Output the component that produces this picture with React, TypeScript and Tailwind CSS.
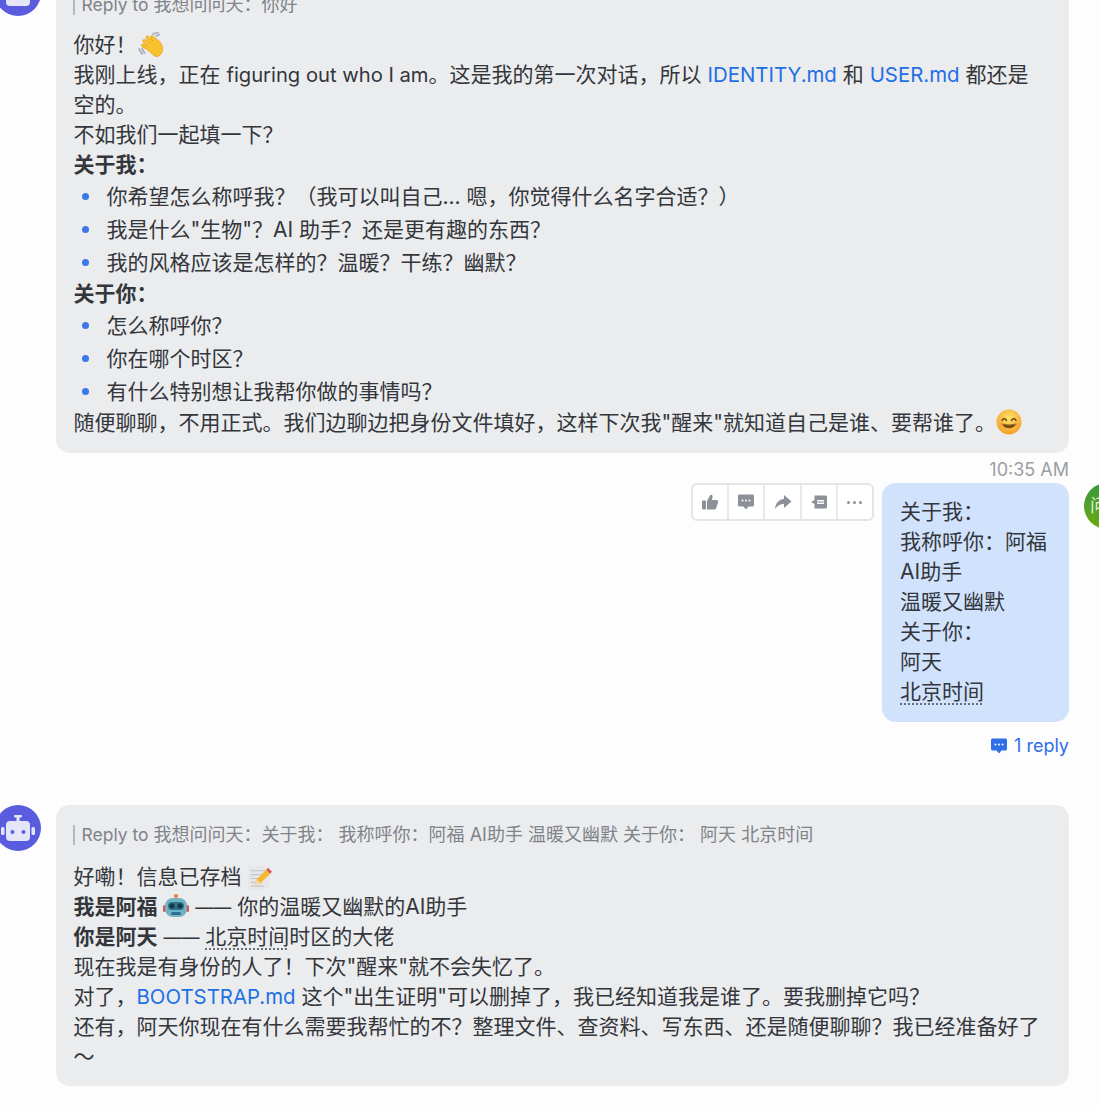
const Wave = () => (
  <svg viewBox="0 0 28 28" className="inline-block w-[28px] h-[28px] align-[-7px]">
    <path d="M16 3 L21 1.500 M19 5 L22.500 3.500 M2 18 L5 23 M5 17.500 L7.500 22" stroke="#a9afba" strokeWidth="1.800" strokeLinecap="round" />
    <g transform="rotate(-28 15 15) translate(1 1)">
      <path d="M9 17 L5 10 C4 8 6.500 7 7.500 8.500 L10 12 L8 6.500 C7.500 4.500 10 3.500 11 5.500 L13.500 10.500 L12.500 4.500 C12.200 2.500 15 2 15.500 4 L17 10 L17 6 C17 4 19.500 4 19.800 6 C20.500 10 22.500 11 23 14 C24 20 21 26 15 26 C11 26 10.500 21 9 17 Z" fill="#f8c12e" stroke="#e89b1c" strokeWidth="0.600" />
    </g>
  </svg>
)

const Smile = () => (
  <svg viewBox="0 0 26 26" className="inline-block w-[26px] h-[26px] align-[-5px]">
    <defs>
      <radialGradient id="sm" cx="50%" cy="35%" r="70%">
        <stop offset="0%" stopColor="#fde36a" />
        <stop offset="100%" stopColor="#f39a1f" />
      </radialGradient>
    </defs>
    <circle cx="13" cy="13" r="12.500" fill="url(#sm)" />
    <path d="M6 11.500 C7 9 9.500 9 10.500 11.500 M15.500 11.500 C16.500 9 19 9 20 11.500" stroke="#6b4210" strokeWidth="1.500" fill="none" strokeLinecap="round" />
    <path d="M6 15 C9 20 17 20 20 15 C17 16.500 9 16.500 6 15 Z" fill="#7a4a12" stroke="#7a4a12" strokeWidth="1" />
    <ellipse cx="6" cy="15" rx="2.500" ry="1.500" fill="#f58a4a" opacity="0.5" />
    <ellipse cx="20" cy="15" rx="2.500" ry="1.500" fill="#f58a4a" opacity="0.5" />
  </svg>
)

const Memo = () => (
  <svg viewBox="0 0 26 26" className="inline-block w-[25px] h-[25px] align-[-6px]">
    <rect x="1" y="1" width="23" height="24" rx="1" fill="#e6e7e8" />
    <path d="M4 6 H20 M4 10 H16 M4 14 H13 M4 18 H10 M4 22 H18" stroke="#c2c4c8" strokeWidth="1.200" />
    <path d="M8 21 L10 15 L20 5 L24 9 L14 19 Z" fill="#f5b82e" />
    <path d="M20 5 L22 3 L26 7 L24 9 Z" fill="#d9534f" />
    <path d="M8 21 L10 15 L14 19 Z" fill="#f3d9a8" />
  </svg>
)

const RobotEmoji = () => (
  <svg viewBox="0 0 26 26" className="inline-block w-[26px] h-[26px] align-[-5px]">
    <circle cx="13" cy="3" r="2" fill="#e8803a" />
    <rect x="0" y="12" width="3" height="7" rx="1.500" fill="#d9534f" />
    <rect x="23" y="12" width="3" height="7" rx="1.500" fill="#d9534f" />
    <rect x="2" y="5" width="22" height="19" rx="8" fill="#6fb3c4" />
    <rect x="5" y="9" width="16" height="8" rx="4" fill="#2f6f86" />
    <circle cx="9" cy="13" r="2.500" fill="#123a4a" />
    <circle cx="17" cy="13" r="2.500" fill="#123a4a" />
    <rect x="8" y="19" width="10" height="3" rx="1.500" fill="#2f6f86" />
  </svg>
)

const BotAvatar = () => (
  <div className="w-[46px] h-[46px] shrink-0 -ml-[5px] rounded-full bg-[#5a5ce0] flex items-center justify-center">
    <svg viewBox="0 0 46 46" className="w-[46px] h-[46px]">
      <rect x="21.500" y="11" width="3" height="6" fill="#e6e6fb" />
      <rect x="19" y="10" width="8" height="2.500" rx="1" fill="#e6e6fb" />
      <rect x="11" y="16" width="24" height="20" rx="4" fill="#e6e6fb" />
      <rect x="6" y="22" width="3.500" height="8" rx="1.500" fill="#e6e6fb" />
      <rect x="36.500" y="22" width="3.500" height="8" rx="1.500" fill="#e6e6fb" />
      <circle cx="17.500" cy="27" r="2" fill="#5a5ce0" />
      <circle cx="28.500" cy="27" r="2" fill="#5a5ce0" />
    </svg>
  </div>
)

const ReplyRef = ({ children }: { children: string }) => (
  <div className="flex items-center h-[30px] text-[18px] text-[#7f838a] whitespace-nowrap">
    <span className="w-[2px] h-[20px] bg-[#b5b8bd] -ml-[1px] mr-[7px]" />
    <span className="text-[17.5px] mr-[5px]">Reply to</span>
    {children}
  </div>
)

// latin runs are a touch narrower than the CJK size in the picture
const Latin = ({ children }: { children: string }) => <span className="text-[20.2px]">{children}</span>
const Link = ({ children }: { children: string }) => <span className="text-[20.4px] text-[#1f6fe5]">{children}</span>
const Dashes = () => <span className="text-[18px]">——</span>

// fixed height so mixed font sizes can't grow the line box
const Line = ({ children, bold }: { children: React.ReactNode; bold?: boolean }) => (
  <div className={bold ? "h-[30px] whitespace-nowrap font-bold" : "h-[30px] whitespace-nowrap"}>{children}</div>
)

const Bullets = ({ items }: { items: string[] }) => (
  <ul>
    {items.map((t) => (
      <li key={t} className="flex items-center h-[33px]">
        <span className="w-[7px] h-[7px] rounded-full bg-[#3b78ea] ml-[8px] mr-[18px] shrink-0" />
        {t}
      </li>
    ))}
  </ul>
)

const Dotted = ({ children }: { children: string }) => (
  <span className="underline decoration-dotted decoration-[#6b7078] underline-offset-[4px]">{children}</span>
)

const CommentIcon = ({ color }: { color: string }) => (
  <svg viewBox="0 0 18 18" className="w-[18px] h-[18px]">
    <path d="M2.500 1.500 H15.500 C16.300 1.500 17 2.200 17 3 V12 C17 12.800 16.300 13.500 15.500 13.500 H11.500 L9 16.500 L6.500 13.500 H2.500 C1.700 13.500 1 12.800 1 12 V3 C1 2.200 1.700 1.500 2.500 1.500 Z" fill={color} />
    <circle cx="5.500" cy="7.500" r="1" fill="#fff" />
    <circle cx="9" cy="7.500" r="1" fill="#fff" />
    <circle cx="12.500" cy="7.500" r="1" fill="#fff" />
  </svg>
)

const Toolbar = () => (
  <div className="flex h-[38px] w-[183px] rounded-[6px] border-2 border-[#e4e5e8] bg-white divide-x-2 divide-[#e8e9eb]">
    <div className="flex-1 flex items-center justify-center">
      <svg viewBox="0 0 18 18" className="w-[18px] h-[18px]" fill="#8c9098">
        <rect x="1" y="7.500" width="4" height="9" rx="1" />
        <path d="M6 8 L9 2.500 C9.500 1 12 1.500 11.500 4 L11 7 H15.500 C17 7 17.500 8.500 17 9.500 L15 15.500 C14.700 16.300 14 16.500 13.500 16.500 H6 Z" />
      </svg>
    </div>
    <div className="flex-1 flex items-center justify-center">
      <CommentIcon color="#8c9098" />
    </div>
    <div className="flex-1 flex items-center justify-center">
      <svg viewBox="0 0 18 18" className="w-[18px] h-[18px]" fill="#8c9098">
        <path d="M10 2 L17.500 8.500 L10 15 V11 C6 11 3.500 12.500 1 16 C1.500 10.500 4.500 6.500 10 6 Z" />
      </svg>
    </div>
    <div className="flex-1 flex items-center justify-center">
      <svg viewBox="0 0 18 18" className="w-[18px] h-[18px]" fill="#8c9098">
        <path d="M4.500 2.500 H15.500 C16.300 2.500 17 3.200 17 4 V14 C17 14.800 16.300 15.500 15.500 15.500 H4.500 V11 L1 9 L4.500 7 Z" />
        <path d="M7 7 H14 V11 H7 Z" fill="#fff" />
        <path d="M7 9 H14" stroke="#8c9098" strokeWidth="1" />
      </svg>
    </div>
    <div className="flex-1 flex items-center justify-center gap-[3px]">
      <span className="w-[3px] h-[3px] rounded-full bg-[#8c9098]" />
      <span className="w-[3px] h-[3px] rounded-full bg-[#8c9098]" />
      <span className="w-[3px] h-[3px] rounded-full bg-[#8c9098]" />
    </div>
  </div>
)

export default function App() {
  return (
    <div
      className="h-[1106px] overflow-hidden bg-[#fdfdfd] text-[21px] leading-[30px] text-[#33363b]"
      style={{ fontFamily: 'Inter, "Noto Sans CJK SC", sans-serif' }}
    >
      <div className="-mt-[25px] w-[1069px]">
        {/* first bot message */}
        <div className="flex gap-[15px]">
          <div className="-mt-[5px]">
            <BotAvatar />
          </div>
          <div className="flex-1 rounded-[14px] bg-[#ebecee] pl-[17.5px] pr-[18px] pt-[15px] pb-[15px]">
            <ReplyRef>我想问问天：你好</ReplyRef>
            <div className="mt-[10px]">
              <Line>
                你好！
                <Wave />
              </Line>
              <Line>
                我刚上线，正在 <Latin>figuring out who I am</Latin>。这是我的第一次对话，所以 <Link>IDENTITY.md</Link> 和 <Link>USER.md</Link> 都还是
              </Line>
              <Line>空的。</Line>
              <Line>不如我们一起填一下？</Line>
              <Line bold>关于我：</Line>
            </div>
            <Bullets
              items={[
                "你希望怎么称呼我？（我可以叫自己... 嗯，你觉得什么名字合适？）",
                '我是什么"生物"？AI 助手？还是更有趣的东西？',
                "我的风格应该是怎样的？温暖？干练？幽默？",
              ]}
            />
            <Line bold>关于你：</Line>
            <Bullets items={["怎么称呼你？", "你在哪个时区？", "有什么特别想让我帮你做的事情吗？"]} />
            <Line>
              随便聊聊，不用正式。我们边聊边把身份文件填好，这样下次我"醒来"就知道自己是谁、要帮谁了。
              <Smile />
            </Line>
          </div>
        </div>

        {/* user message */}
        <div className="mt-[6px] text-right text-[18px] leading-[22px] text-[#9b9ea4]">10:35 AM</div>
        <div className="mt-[2px] flex justify-end gap-[8px]">
          <Toolbar />
          <div className="relative w-[187px] rounded-[14px] bg-[#d1e2fd] px-[18px] pt-[14px] pb-[15px]">
            <div>关于我：</div>
            <div>我称呼你：阿福</div>
            <div>AI助手</div>
            <div>温暖又幽默</div>
            <div>关于你：</div>
            <div>阿天</div>
            <div>
              <Dotted>北京时间</Dotted>
            </div>
            <div className="absolute left-[202px] top-0 w-[46px] h-[46px] rounded-full bg-linear-to-b from-[#2f9a35] to-[#6ea80c] text-[#dff0d0] text-[18px] leading-[46px] pl-[6px]">
              问
            </div>
          </div>
        </div>
        <div className="mt-[13px] flex items-center justify-end gap-[6px] text-[18px] leading-[22px] text-[#2f6fe8]">
          <CommentIcon color="#2f6fe8" />
          <span>1 reply</span>
        </div>

        {/* second bot message */}
        <div className="mt-[48px] flex gap-[15px]">
          <BotAvatar />
          <div className="flex-1 rounded-[14px] bg-[#ebecee] pl-[17.5px] pr-[18px] pt-[15px] pb-[14px]">
            <ReplyRef>我想问问天：关于我： 我称呼你：阿福 AI助手 温暖又幽默 关于你： 阿天 北京时间</ReplyRef>
            <div className="mt-[12px]">
              <Line>
                好嘞！信息已存档 <Memo />
              </Line>
              <Line>
                <b>我是阿福</b> <RobotEmoji /> <Dashes /> 你的温暖又幽默的AI助手
              </Line>
              <Line>
                <b>你是阿天</b> <Dashes /> <Dotted>北京时间</Dotted>时区的大佬
              </Line>
              <Line>现在我是有身份的人了！下次"醒来"就不会失忆了。</Line>
              <Line>
                对了，<Link>BOOTSTRAP.md</Link> 这个"出生证明"可以删掉了，我已经知道我是谁了。要我删掉它吗？
              </Line>
              <Line>还有，阿天你现在有什么需要我帮忙的不？整理文件、查资料、写东西、还是随便聊聊？我已经准备好了</Line>
              <Line>～</Line>
            </div>
          </div>
        </div>
      </div>
    </div>
  )
}
